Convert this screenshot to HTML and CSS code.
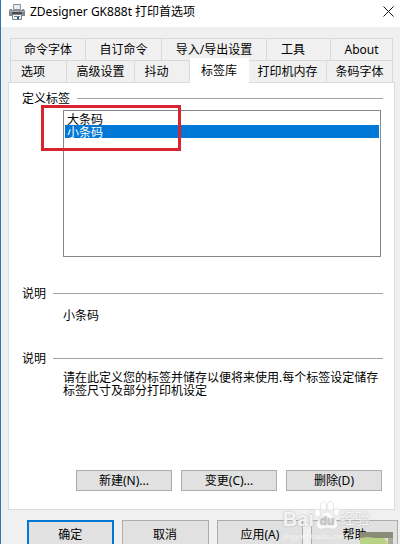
FILE: index.html
```html
<!DOCTYPE html>
<html lang="zh-CN">
<head>
    <meta charset="UTF-8">
    <meta name="viewport" content="width=device-width, initial-scale=1.0">
    <title>ZDesigner GK888t 打印首选项</title>
    <link rel="stylesheet" href="styles.css">
</head>
<body>
    <div class="dialog">
        <header class="titlebar">
            <svg class="printer" viewBox="0 0 16 16" width="16" height="16" aria-hidden="true">
                <path d="M4.5 0.5h7v5h-7z" fill="#e8eef2" stroke="#8b9196"/>
                <path d="M1 5h2v1h10V5h2l1 2v5H0V7z" fill="#85898d"/>
                <path d="M1 7h14v1H1z" fill="#a9aeb2"/>
                <path d="M3 8h10v2H3z" fill="#4a4e51"/>
                <path d="M3.5 10.5h9v5h-9z" fill="#f4f8fb" stroke="#7c8387"/>
                <path d="M5 12h6v1H5z" fill="#5f87a5"/>
                <path d="M8 13h2v2H8z" fill="#2c5674"/>
            </svg>
            <h1>ZDesigner GK888t 打印首选项</h1>
            <button class="close" type="button" aria-label="关闭">
                <svg viewBox="0 0 11 11" width="11" height="11"><path d="M0.5 0.5l10 10M10.5 0.5l-10 10" stroke="#111" fill="none"/></svg>
            </button>
        </header>

        <main>
            <div class="tabs tabs-back">
                <button type="button">命令字体</button>
                <button type="button">自订命令</button>
                <button type="button">导入/导出设置</button>
                <button type="button" class="short">工具</button>
                <button type="button">About</button>
            </div>
            <div class="tabs tabs-front">
                <button type="button" class="short">选项</button>
                <button type="button">高级设置</button>
                <button type="button" class="short">抖动</button>
                <button type="button" class="active">标签库</button>
                <button type="button">打印机内存</button>
                <button type="button">条码字体</button>
            </div>

            <div class="panel">
                <section class="group">
                    <div class="group-title"><label for="labels">定义标签</label></div>
                    <div class="group-body">
                        <select id="labels" class="label-list" size="2">
                            <option>大条码</option>
                            <option selected>小条码</option>
                        </select>
                        <div class="marker"></div>
                    </div>
                </section>

                <section class="group name-group">
                    <h2 class="group-title">说明</h2>
                    <p class="group-body">小条码</p>
                </section>

                <section class="group help-group">
                    <h2 class="group-title">说明</h2>
                    <p class="group-body">请在此定义您的标签并储存以便将来使用.每个标签设定储存标签尺寸及部分打印机设定</p>
                </section>

                <div class="panel-buttons">
                    <button class="btn" type="button">新建(N)...</button>
                    <button class="btn" type="button">变更(C)...</button>
                    <button class="btn" type="button">删除(D)</button>
                </div>
            </div>

            <footer class="dialog-buttons">
                <button class="btn default" type="button">确定</button>
                <button class="btn" type="button">取消</button>
                <button class="btn" type="button">应用(A)</button>
                <button class="btn" type="button">帮助</button>
            </footer>
        </main>

        <div class="watermark">
            <div class="mark-logo">
                <span class="mark-bai">Bai</span>
                <svg class="paw" viewBox="0 0 26 28" width="26" height="28" aria-hidden="true">
                    <ellipse cx="3.5" cy="12" rx="3" ry="4"/>
                    <ellipse cx="9.5" cy="5" rx="3" ry="4.5"/>
                    <ellipse cx="16.5" cy="5" rx="3" ry="4.5"/>
                    <ellipse cx="22.5" cy="11" rx="3" ry="4"/>
                    <path d="M13 11c4 0 5 4 8 7 4 4 3 10-2 10-3 0-3-1-6-1s-3 1-6 1c-5 0-6-6-2-10 3-3 4-7 8-7z"/>
                    <text x="13" y="24" text-anchor="middle">du</text>
                </svg>
                <span class="mark-name">经验</span>
            </div>
            <div class="mark-url">jingyan.baidu.com</div>
        </div>

        <svg class="corner" viewBox="0 0 40 12" width="40" height="12" aria-hidden="true">
            <path d="M0 0h33v12h-5V6H0z" fill="#8b8c78"/>
            <path d="M0 6l8-1 6 1h10l3 3 1 3H0z" fill="#b9d384"/>
            <path d="M28 6h5v6h-5z" fill="#a9a998"/>
        </svg>
    </div>
</body>
</html>
```
FILE: styles.css
```css
* {
    box-sizing: border-box;
}

body {
    margin: 0;
    height: 100vh;
    overflow: hidden;
    background-color: #f0f0f0;
    color: black;
    font-family: "Noto Sans", "Noto Sans CJK SC", sans-serif;
    font-size: 12px;
    line-height: 13px;
}

h1, h2, p {
    margin: 0;
    font-size: 12px;
    font-weight: normal;
}

button {
    padding: 0;
    font: inherit;
    color: inherit;
    white-space: nowrap;
}

.dialog {
    position: relative;
    height: 100%;
    overflow: hidden;
    border-left: 1px solid #2f76ae;
}

/* Title bar */
.titlebar {
    display: flex;
    align-items: center;
    height: 27px;
    padding: 0 6px 4px 8px;
    background-color: white;
}

.titlebar h1 {
    flex: 1;
    margin-left: 5px;
}

.close {
    display: flex;
    border: none;
    background: none;
}

main {
    padding: 11px 5px 0 7px;
}

/* Tabs */
.tabs {
    display: grid;
    margin: 0 2px;
    border-left: 1px solid #d9d9d9;
}

.tabs-back {
    grid-template-columns: 75fr 76fr 105fr 64fr 62fr;
}

.tabs-front {
    grid-template-columns: 56fr 68fr 55fr 59fr 78fr 66fr;
}

.tabs button {
    height: 22px;
    border: 1px solid #d9d9d9;
    border-width: 1px 1px 0 0;
    background-color: #f0f0f0;
}

.tabs .short {
    padding-right: 11px;
}

.tabs .active {
    height: 25px;
    margin: -2px 0 -1px;
    padding-bottom: 2px;
    border-color: white;
    background-color: white;
    position: relative;
}

/* Panel */
.panel {
    padding: 9px 11px 18px 13px;
    border: 1px solid #dcdcdc;
    background-color: white;
}

.group-title {
    display: flex;
    align-items: center;
    gap: 7px;
}

.group-title::after {
    content: "";
    flex: 1;
    height: 1px;
    background-color: #a0a0a0;
}

.group-body {
    position: relative;
    margin: 5px 2px 0 41px;
}

.label-list {
    display: block;
    width: 100%;
    height: 147px;
    padding: 1px;
    overflow: hidden;
    border: 1px solid #828790;
    border-radius: 0;
    outline: none;
    background-color: white;
    font: inherit;
}

.label-list option {
    display: flex;
    align-items: center;
    height: 13px;
    min-height: 0;
    padding: 0 0 0 2px;
    line-height: 13px;
    color: black;
}

.label-list option:checked {
    background: #0078d7 linear-gradient(#0078d7, #0078d7);
    color: white;
    -webkit-text-fill-color: white;
}

/* Red frame around the list entries */
.marker {
    position: absolute;
    top: -5px;
    left: -22px;
    width: 140px;
    height: 46px;
    border: 3px solid #d9232e;
    pointer-events: none;
}

.name-group {
    margin-top: 30px;
}

.name-group .group-body {
    margin-top: 9px;
}

.help-group {
    margin-top: 30px;
}

.help-group .group-body {
    margin-top: 6px;
}

/* Buttons */
.btn {
    height: 21px;
    border: 1px solid #adadad;
    background-color: #e1e1e1;
}

.panel-buttons {
    display: grid;
    grid-template-columns: repeat(3, 1fr);
    gap: 9px;
    margin: 73px 1px 0 54px;
}

.dialog-buttons {
    display: grid;
    grid-template-columns: repeat(4, 1fr);
    gap: 8px;
    margin: 10px -3px 0 19px;
}

.dialog-buttons .btn {
    height: 28px;
}

.default {
    border: 2px solid #0078d7;
}

/* Watermark */
.watermark {
    position: absolute;
    right: 30px;
    bottom: 2px;
    color: rgba(255, 255, 255, 0.85);
    text-shadow: 0 0 2px #aaa;
    pointer-events: none;
}

.mark-logo {
    display: flex;
    align-items: flex-end;
    height: 32px;
    padding-bottom: 3px;
}

.mark-bai {
    font: bold 20px/20px "Liberation Sans", sans-serif;
}

.paw {
    fill: rgba(255, 255, 255, 0.9);
    stroke: #cfcfcf;
    stroke-width: 0.5;
}

.paw text {
    fill: #c4c4c4;
    stroke: none;
    font: bold 12px "Liberation Sans", sans-serif;
}

.mark-name {
    font-size: 15px;
    line-height: 21px;
}

.mark-url {
    color: rgba(255, 255, 255, 0.6);
    text-shadow: none;
    font: 8px/10px "Liberation Sans", sans-serif;
}

.corner {
    position: absolute;
    right: 0;
    bottom: 0;
}
```
